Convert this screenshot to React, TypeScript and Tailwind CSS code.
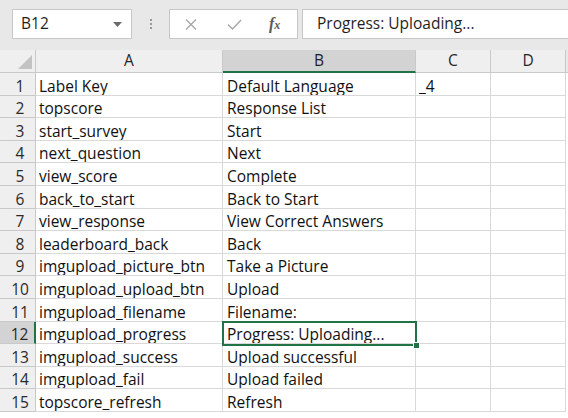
import React from "react";

const rows: [string, string, string][] = [
  ["Label Key", "Default Language", "_4"],
  ["topscore", "Response List", ""],
  ["start_survey", "Start", ""],
  ["next_question", "Next", ""],
  ["view_score", "Complete", ""],
  ["back_to_start", "Back to Start", ""],
  ["view_response", "View Correct Answers", ""],
  ["leaderboard_back", "Back", ""],
  ["imgupload_picture_btn", "Take a Picture", ""],
  ["imgupload_upload_btn", "Upload", ""],
  ["imgupload_filename", "Filename:", ""],
  ["imgupload_progress", "Progress: Uploading...", ""],
  ["imgupload_success", "Upload successful", ""],
  ["imgupload_fail", "Upload failed", ""],
  ["topscore_refresh", "Refresh", ""],
];

const font = { fontFamily: '"Open Sans", "Liberation Sans", sans-serif' };

function FormulaBar() {
  return (
    <div className="flex h-[50px] items-start bg-[#e8e8e8] pt-[9px]">
      <div className="ml-[12px] flex h-[30px] w-[120px] items-center justify-between border border-[#c6c6c6] bg-white pl-[8px] pr-[9px] text-[15.5px] text-[#1f1f1f]">
        <span>B12</span>
        <svg width="9" height="5" viewBox="0 0 9 5">
          <path d="M0 0h9L4.5 5z" fill="#6b6b6b" />
        </svg>
      </div>
      <div className="flex h-[30px] w-[37px] flex-col items-center justify-center gap-[2px]">
        <span className="h-[2px] w-[2px] bg-[#9a9a9a]" />
        <span className="h-[2px] w-[2px] bg-[#9a9a9a]" />
        <span className="h-[2px] w-[2px] bg-[#9a9a9a]" />
      </div>
      <div className="flex h-[30px] w-[129px] items-center border border-[#c6c6c6] bg-white">
        <svg className="ml-[15px]" width="12" height="11" viewBox="0 0 12 11">
          <path d="M1 0.5l10 10M11 0.5l-10 10" stroke="#a6a6a6" strokeWidth="1.3" />
        </svg>
        <svg className="ml-[30px]" width="15" height="11" viewBox="0 0 15 11">
          <path d="M1 5.5l4.5 4.5L14 1" stroke="#a6a6a6" strokeWidth="1.4" fill="none" />
        </svg>
        <span
          className="ml-[27px] text-[16px] font-bold italic text-[#5a5a5a]"
          style={{ fontFamily: '"Liberation Serif", serif' }}
        >
          f<span className="text-[12px]">x</span>
        </span>
      </div>
      <div className="ml-[4px] flex h-[30px] flex-1 items-center border border-r-0 border-[#c6c6c6] bg-white pl-[14px] text-[15.5px] text-[#1f1f1f]">
        Progress: Uploading...
      </div>
    </div>
  );
}

const cell = "flex items-end overflow-hidden whitespace-nowrap border-b border-r border-[#d9d9d9] pb-[1px] leading-[16px]";

export default function App() {
  return (
    <div className="h-[418px] w-[568px] overflow-hidden bg-white" style={font}>
      <FormulaBar />
      <div className="relative grid grid-cols-[36px_187px_193px_75px_75px_2px] grid-rows-[23px_repeat(15,22.6px)] text-[15.5px] text-[#111]">
        <div className="relative border-b border-r border-[#c9c9c9] bg-[#efefef]">
          <svg className="absolute bottom-[3px] right-[3px]" width="14" height="14" viewBox="0 0 14 14">
            <path d="M14 0V14H0z" fill="#c3c3c3" />
          </svg>
        </div>
        {["A", "B", "C", "D"].map((c) => (
          <div
            key={c}
            className={
              c === "B"
                ? "flex items-center justify-center border-b-2 border-r border-b-[#217346] border-r-[#c9c9c9] bg-[#d3d3d3] pt-[1px] text-[#1f1f1f]"
                : "flex items-center justify-center border-b border-r border-[#c9c9c9] bg-[#efefef] text-[#262626]"
            }
          >
            {c}
          </div>
        ))}
        <div className="border-b border-[#c9c9c9] bg-[#e8e8e8]" />
        {rows.map((r, i) => (
          <React.Fragment key={i}>
            <div
              className={
                i === 11
                  ? "flex items-end justify-center border-b border-r-2 border-b-[#c9c9c9] border-r-[#217346] bg-[#d3d3d3] pb-[1px] pl-[5px] leading-[16px] text-[#2a2a2a]"
                  : "flex items-end justify-center border-b border-r border-[#c9c9c9] bg-[#efefef] pb-[1px] pl-[5px] leading-[16px] text-[#2a2a2a]"
              }
            >
              {i + 1}
            </div>
            <div className={cell + " pl-[3px]"}>{r[0]}</div>
            <div className={cell + " pl-[4px]"}>{r[1]}</div>
            <div className={cell + " pl-[3px]"}>{r[2]}</div>
            <div className="border-b border-r border-[#d9d9d9]" />
            <div className="bg-white" />
          </React.Fragment>
        ))}
        <div className="pointer-events-none absolute left-[222px] top-[270.8px] h-[25px] w-[195px] border-2 border-[#217346]">
          <div className="absolute -bottom-[5px] -right-[5px] h-[7px] w-[7px] border border-white bg-[#217346]" />
        </div>
      </div>
    </div>
  );
}
